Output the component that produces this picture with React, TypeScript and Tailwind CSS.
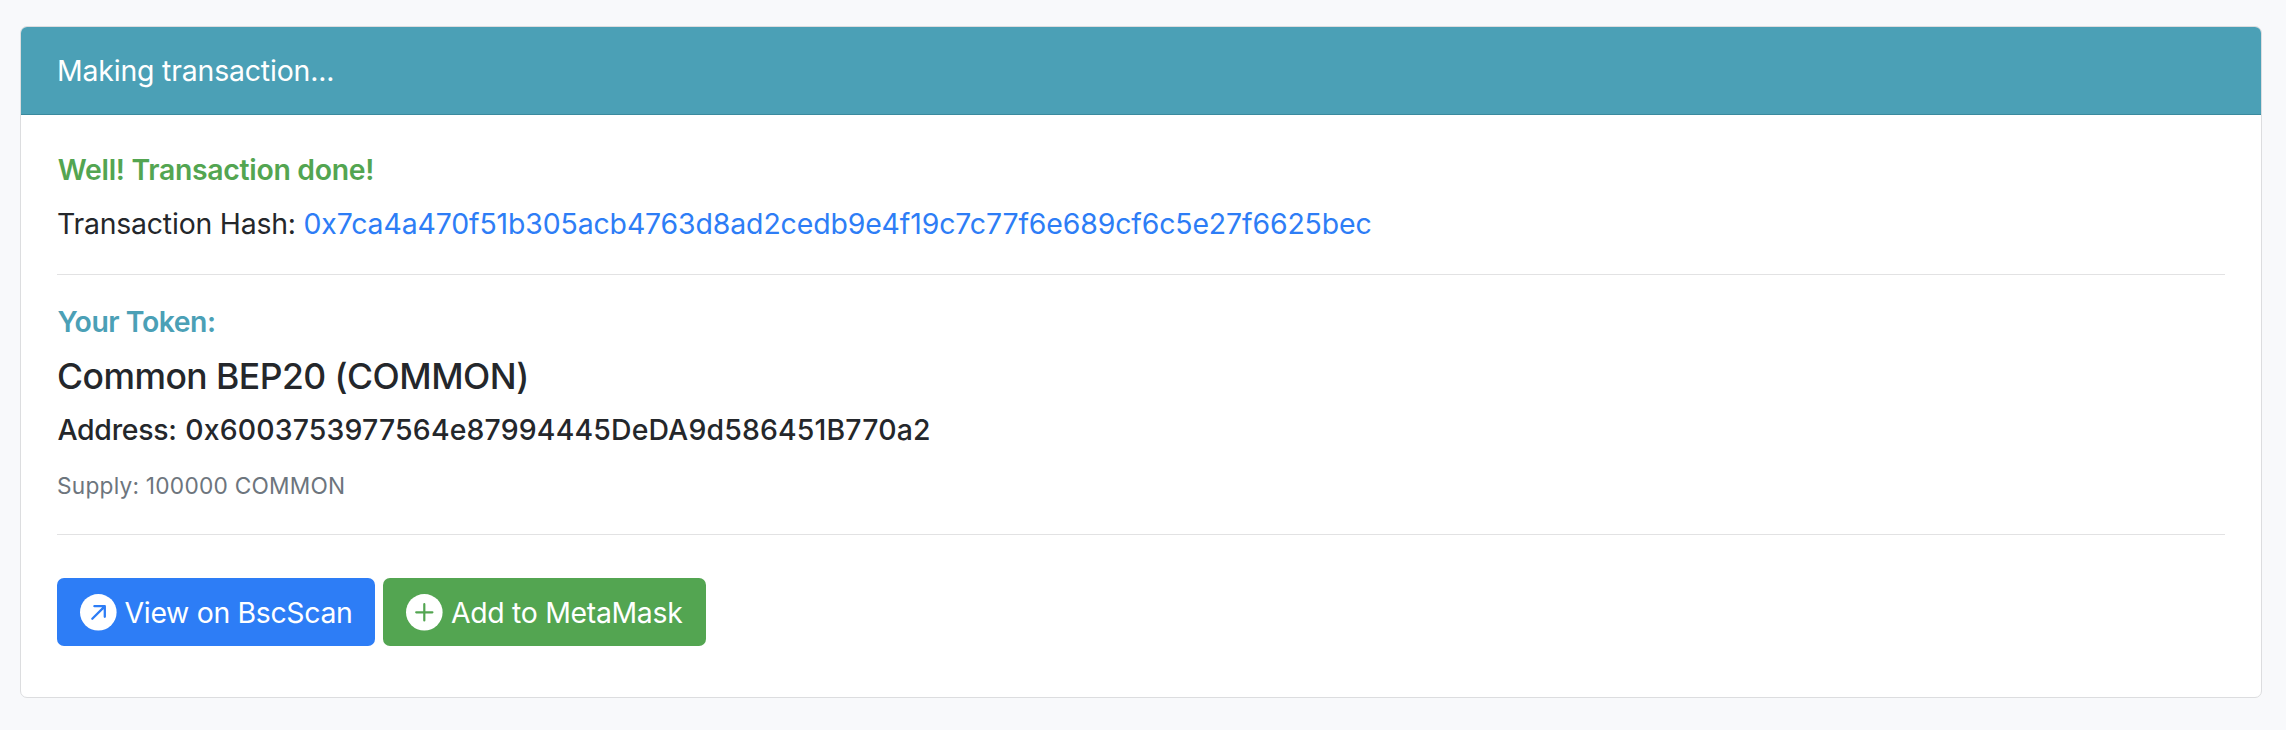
import type { ReactNode } from "react";

const TX_HASH = "0x7ca4a470f51b305acb4763d8ad2cedb9e4f19c7c77f6e689cf6c5e27f6625bec";
const ADDRESS = "0x6003753977564e87994445DeDA9d586451B770a2";

function ArrowCircle() {
  return (
    <svg className="size-[37px] shrink-0" viewBox="0 0 37 37" fill="none">
      <circle cx="18.3" cy="18.3" r="18.3" fill="#fff" />
      <path
        d="M12.3 24.7 L24.2 12.9 M14.4 12.2 H24.8 V22.8"
        stroke="#2d7df6"
        strokeWidth="2.3"
        strokeLinecap="round"
        strokeLinejoin="round"
      />
    </svg>
  );
}

function PlusCircle() {
  return (
    <svg className="size-[37px] shrink-0" viewBox="0 0 37 37" fill="none">
      <circle cx="18.3" cy="18.3" r="18.3" fill="#fff" />
      <path d="M18.3 10.2 V26.4 M10.2 18.3 H26.4" stroke="#53a551" strokeWidth="2.2" strokeLinecap="round" />
    </svg>
  );
}

function Button({ className, children }: { className: string; children: ReactNode }) {
  return (
    <button type="button" className={`flex h-[68px] items-center rounded-[7px] pl-[23px] whitespace-nowrap text-white ${className}`}>
      {children}
    </button>
  );
}

export default function App() {
  return (
    <div className="h-[730px] overflow-hidden bg-[#f8f9fb] pt-[26px] pr-6 pl-5 font-['Inter','Liberation_Sans',sans-serif] text-[28.4px] text-[#24272b]">
      <div className="h-[672px] overflow-hidden rounded-[7px] border border-[#dcdddf] bg-white">
        <div className="flex h-[88px] items-center border-b border-[#3a8a9e] bg-[#4ba0b6] pl-[36px] leading-[44px] tracking-[-0.16px] text-white">
          Making transaction...
        </div>
        <div className="px-9 pt-[37px]">
          <h5 className="h-[35px] pl-[0.8px] leading-[35px] font-semibold tracking-[-0.301px] text-[#53a551]">
            Well! Transaction done!
          </h5>
          <p className="mt-[15px] flex h-[44px] leading-[44px] whitespace-nowrap">
            <span className="w-[246.5px] tracking-[-0.2px]">Transaction Hash:</span>
            <a className="tracking-[-0.11px] text-[#2d7df6]">{TX_HASH}</a>
          </p>
          <hr className="mt-[28px] border-[#e2e2e3]" />
          <h5 className="mt-[29px] h-[35px] pl-[0.6px] leading-[35px] font-semibold tracking-[-0.464px] text-[#4ba0b6]">
            Your Token:
          </h5>
          <h4 className="mt-[16px] h-[44px] text-[35.5px] leading-[44px] font-medium tracking-[-0.538px]">
            Common BEP20 (COMMON)
          </h4>
          <h5 className="mt-[13px] flex h-[35px] pl-[0.4px] leading-[35px] font-medium whitespace-nowrap">
            <span className="w-[127.8px] tracking-[-0.25px]">Address:</span>
            <span className="tracking-[0.175px]">{ADDRESS}</span>
          </h5>
          <p className="mt-[17px] h-[44px] text-[22.7px] leading-[44px] tracking-[0.23px] text-[#6d757d]">
            Supply: 100000 COMMON
          </p>
          <hr className="mt-[26px] border-[#e2e2e3]" />
          <div className="mt-[43px] flex gap-2">
            <Button className="w-[318px] bg-[#2d7df6]">
              <ArrowCircle />
              <span className="pt-0.5 pl-[7.6px] tracking-[-0.324px]">View on BscScan</span>
            </Button>
            <Button className="w-[323px] bg-[#53a551]">
              <PlusCircle />
              <span className="pt-0.5 pl-[8px] tracking-[-0.31px]">Add to MetaMask</span>
            </Button>
          </div>
        </div>
      </div>
    </div>
  );
}
